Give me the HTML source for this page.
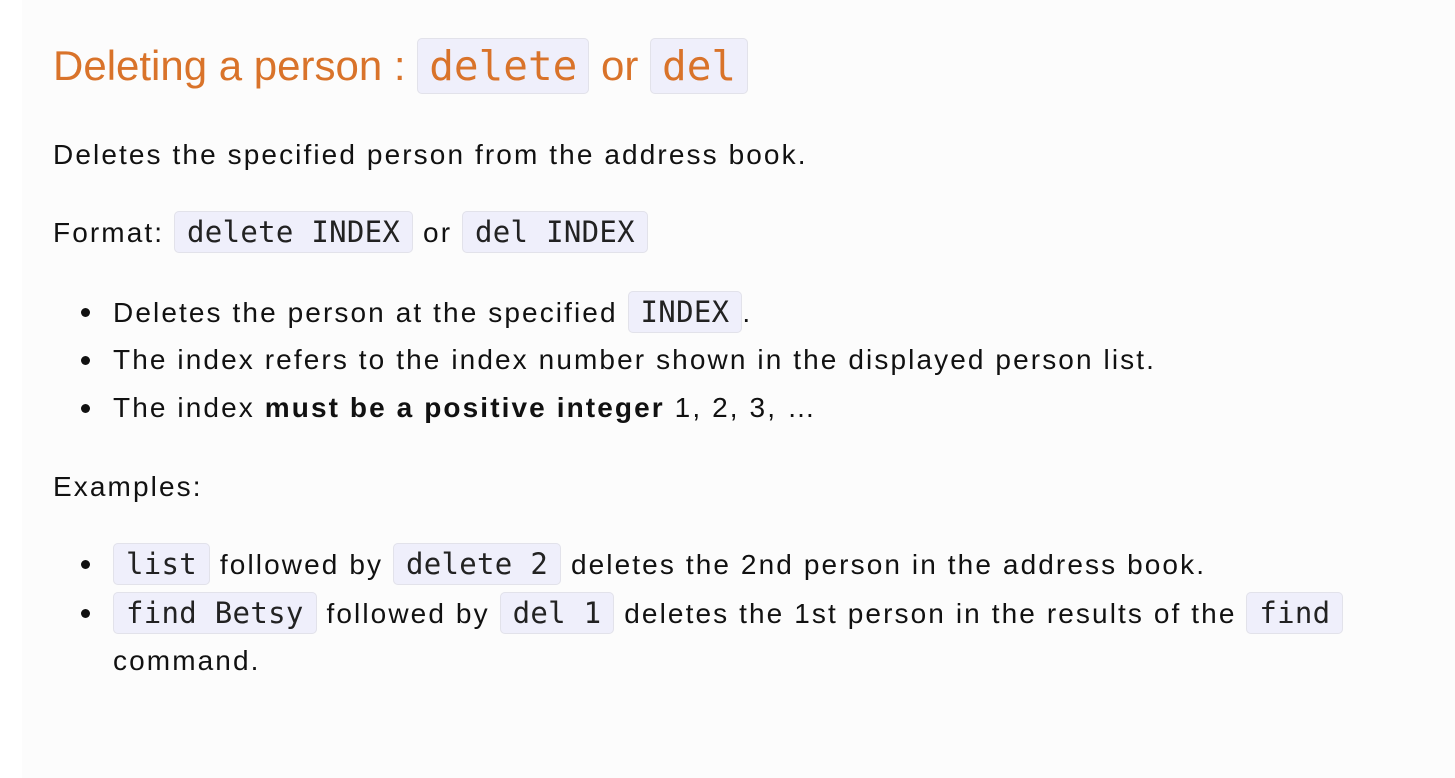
<!DOCTYPE html>
<html><head><meta charset="utf-8"><style>
html,body{margin:0;padding:0;background:#fff;width:1455px;height:778px;overflow:hidden}
.main{position:absolute;left:22px;top:0;width:1433px;height:778px;background:#fcfcfc}
.c{position:absolute;left:53px;font-family:"Liberation Sans",sans-serif;font-size:28px;letter-spacing:2.1px;color:#111;white-space:nowrap;line-height:36px}
code{font-family:"DejaVu Sans Mono",monospace;font-size:29px;letter-spacing:0.3px;background:#efeffb;border:1.5px solid #e2e2ea;border-radius:5px;padding:3px 12px;color:#222}
h1{position:absolute;left:53px;top:37px;margin:0;font-family:"Liberation Sans",sans-serif;font-weight:normal;font-size:42px;color:#d9732a;white-space:nowrap;letter-spacing:0px;line-height:58px}
h1 code{font-size:41px;color:#d9732a;padding:3px 11px;letter-spacing:0}
.li{position:absolute;left:113px}
.li:before{content:"";position:absolute;left:-32px;top:14px;width:9px;height:9px;border-radius:50%;background:#111}
</style></head><body><div class="main"></div>
<h1>Deleting a person : <code>delete</code> or <code>del</code></h1>
<div class="c" style="top:137px">Deletes the specified person from the address book.</div>
<div class="c" style="top:214px">Format: <code>delete INDEX</code> or <code>del INDEX</code></div>
<div class="c li" style="top:294px">Deletes the person at the specified <code>INDEX</code>.</div>
<div class="c li" style="top:342px">The index refers to the index number shown in the displayed person list.</div>
<div class="c li" style="top:390px">The index <b>must be a positive integer</b> 1, 2, 3, …</div>
<div class="c" style="top:469px">Examples:</div>
<div class="c li" style="top:546px"><code>list</code> followed by <code>delete 2</code> deletes the 2nd person in the address book.</div>
<div class="c li" style="top:595px"><code>find Betsy</code> followed by <code>del 1</code> deletes the 1st person in the results of the <code>find</code></div>
<div class="c" style="top:643px;left:113px">command.</div>
</body></html>
